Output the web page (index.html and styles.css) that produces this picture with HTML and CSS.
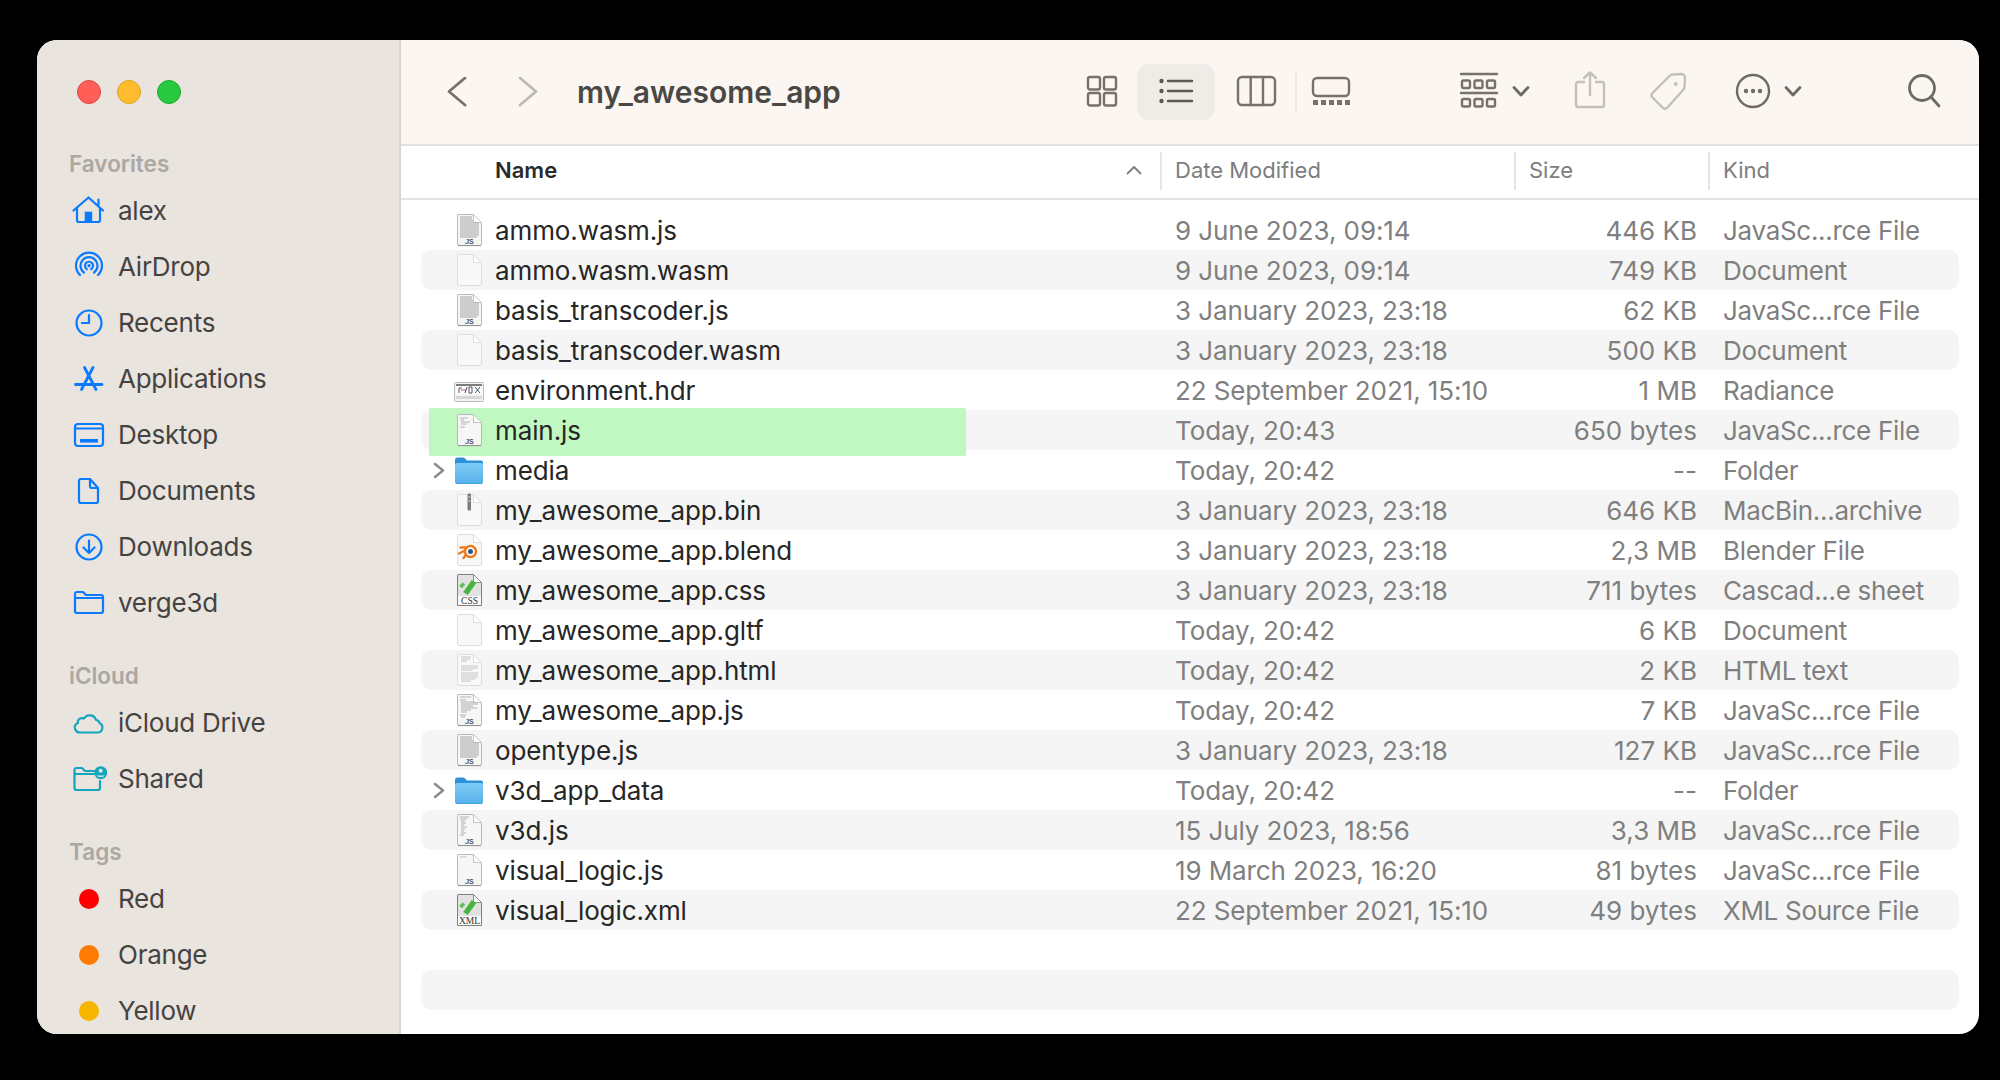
FILE: index.html
```html
<!DOCTYPE html>
<html lang="en">
<head>
    <meta charset="UTF-8">
    <title>my_awesome_app</title>
    <link rel="stylesheet" href="styles.css">
</head>
<body>
<svg class="icon-defs" width="0" height="0">
    <defs>
        <linearGradient id="folder-fill" x1="0" y1="0" x2="0" y2="1">
            <stop offset="0" stop-color="#7fcbf6"/>
            <stop offset="1" stop-color="#55b0ea"/>
        </linearGradient>
        <symbol id="page-light" viewBox="0 0 32 36">
            <path d="M5 2.5H20.5L28.5 10.5V32a1.5 1.5 0 0 1-1.5 1.5H6A1.5 1.5 0 0 1 4.500 32V3z" fill="#f8f8f8" stroke="#dedede"/>
            <path d="M20.500 2.500V10.500H28.500z" fill="#fff" stroke="#dedede"/>
        </symbol>
        <symbol id="page-grey" viewBox="0 0 32 36">
            <path d="M5 2.500H20.500L28.500 10.500V32a1.500 1.500 0 0 1-1.500 1.500H6A1.500 1.500 0 0 1 4.500 32V3z" fill="#f6f6f6" stroke="#b9b9b9"/>
            <path d="M5 33.600H28" stroke="#8f8f8f"/>
            <path d="M20.500 2.500V10.500H28.500z" fill="#fff" stroke="#c4c4c4"/>
        </symbol>
        <symbol id="icon-blank" viewBox="0 0 32 36">
            <use href="#page-light"/>
        </symbol>
        <symbol id="icon-js-dense" viewBox="0 0 32 36">
            <use href="#page-grey"/>
            <path d="M7 5H19M7 7H19M7 9H20M7 11H26M7 13H26M7 15H26M7 17H26M7 19H26M7 21H26M7 23H26M7 25H24" stroke="#a4a4a4" fill="none"/>
            <text class="icon-label" x="16.500" y="31.500">JS</text>
        </symbol>
        <symbol id="icon-js-sparse" viewBox="0 0 32 36">
            <use href="#page-grey"/>
            <path d="M7 6H15M7 8H11M8 10H17M8 12H14M7 15H12" stroke="#b5b5b5" fill="none"/>
            <text class="icon-label" x="16.500" y="31.500">JS</text>
        </symbol>
        <symbol id="icon-js-mid" viewBox="0 0 32 36">
            <use href="#page-grey"/>
            <path d="M7 5H18M7 8H13M8 10H22M8 12H25M8 14H20M8 16H24M8 18H18M8 20H14M7 23H13M8 25H12" stroke="#b0b0b0" fill="none"/>
            <text class="icon-label" x="16.500" y="31.500">JS</text>
        </symbol>
        <symbol id="icon-js-v3d" viewBox="0 0 32 36">
            <use href="#page-grey"/>
            <path d="M7 5H16M7 7H14M8 9H12M8 11H13M8 13H11M8 15H14M8 17H12M8 19H11M8 21H13M7 23H11" stroke="#b0b0b0" fill="none"/>
            <text class="icon-label" x="16.500" y="31.500">JS</text>
        </symbol>
        <symbol id="icon-js-min" viewBox="0 0 32 36">
            <use href="#page-grey"/>
            <path d="M7 5H14" stroke="#c4c4c4" fill="none"/>
            <text class="icon-label" x="16.500" y="31.500">JS</text>
        </symbol>
        <symbol id="icon-bin" viewBox="0 0 32 36">
            <use href="#page-light"/>
            <rect x="14.500" y="1.500" width="3.500" height="17" rx="1" fill="#7b7b7b"/>
            <path d="M15.200 5H17.300M15.200 9H17.300" stroke="#e4e4e4"/>
        </symbol>
        <symbol id="icon-blend" viewBox="0 0 32 36">
            <use href="#page-light"/>
            <path d="M7.500 15.500H16M6 21.500L12 18.500M10.500 26L13.500 22" stroke="#ee7a1b" stroke-width="2.400" stroke-linecap="round" fill="none"/>
            <circle cx="17.500" cy="19.500" r="5.500" fill="#fff" stroke="#ee7a1b" stroke-width="2.400"/>
            <circle cx="17.500" cy="19.500" r="2.500" fill="#265787"/>
        </symbol>
        <symbol id="icon-css" viewBox="0 0 32 36">
            <path d="M5 2.500H20.500L28.500 10.500V33.500H4.500V3z" fill="#e2e2e2" stroke="#7f7f7f"/>
            <path d="M5 24H28V33H5z" fill="#fbfbfb"/>
            <path d="M20.500 2.500V10.500H28.500z" fill="#fff" stroke="#8f8f8f"/>
            <path d="M12.500 21.500L21 9.500" stroke="#46b43f" stroke-width="5.500" fill="none"/>
            <path d="M7.500 15L11 11.500" stroke="#5cc053" stroke-width="3.500" fill="none"/>
            <text class="icon-label icon-label-doc" x="16.500" y="32">CSS</text>
        </symbol>
        <symbol id="icon-xml" viewBox="0 0 32 36">
            <path d="M5 2.500H20.500L28.500 10.500V33.500H4.500V3z" fill="#e2e2e2" stroke="#7f7f7f"/>
            <path d="M5 24H28V33H5z" fill="#fbfbfb"/>
            <path d="M20.500 2.500V10.500H28.500z" fill="#fff" stroke="#8f8f8f"/>
            <path d="M12.500 21.500L21 9.500" stroke="#46b43f" stroke-width="5.500" fill="none"/>
            <path d="M7.500 15L11 11.500" stroke="#5cc053" stroke-width="3.500" fill="none"/>
            <text class="icon-label icon-label-doc" x="16.500" y="32">XML</text>
        </symbol>
        <symbol id="icon-html" viewBox="0 0 32 36">
            <use href="#page-light"/>
            <path d="M8 5H18M8 7H17M8 9H14M8 14H25M8 16H25M8 18H20M8 21H25M8 23H25M8 25H25M8 27H22M8 29H18" stroke="#c6c6c6" fill="none"/>
        </symbol>
        <symbol id="icon-hdr" viewBox="0 0 32 36">
            <rect x="1.500" y="10.500" width="29" height="19" rx="1" fill="#f3f3f3" stroke="#bdbdbd"/>
            <rect x="3" y="12" width="26" height="2" fill="#7d7d7d"/>
            <rect x="3" y="14" width="26" height="8" fill="#fff"/>
            <path d="M6 21V16H9M12 21L14 15M16 15H19V21H16ZM22 15L27 21M27 15L22 21" stroke="#50506a" fill="none"/>
            <path d="M8 18L13 18" stroke="#d05050"/>
            <rect x="3" y="24" width="26" height="3" fill="#d6d6d6"/>
        </symbol>
        <symbol id="icon-folder" viewBox="0 0 32 36">
            <path d="M2 8a2.500 2.500 0 0 1 2.500-2.500H11l3 3h14a2 2 0 0 1 2 2V14H2z" fill="#2c90db"/>
            <rect x="2" y="11" width="28" height="21" rx="2" fill="url(#folder-fill)"/>
            <path d="M3 31.500H29" stroke="#3f9fdf"/>
        </symbol>
    </defs>
</svg>

<div class="window">
    <aside class="sidebar">
        <div class="traffic">
            <span class="light light-close"></span>
            <span class="light light-min"></span>
            <span class="light light-max"></span>
        </div>

        <section class="side-group">
            <div class="side-title">Favorites</div>
            <div class="side-item">
                <svg class="side-icon" viewBox="0 0 36 36"><path d="M2.500 17.500L17.500 4.500L32 17.500M6 15V27a2 2 0 0 0 2 2H27a2 2 0 0 0 2-2V15M27.500 6.500V12"/><rect class="solid" x="13.700" y="18.700" width="7.500" height="10"/></svg>
                <span>alex</span>
            </div>
            <div class="side-item">
                <svg class="side-icon" viewBox="0 0 36 36"><path d="M9 26A13 13 0 1 1 27 26M12.900 23.500A8.500 8.500 0 1 1 23.100 23.500M15.700 20A4 4 0 1 1 20.300 20"/><circle class="solid" cx="18" cy="16.700" r="1.600"/></svg>
                <span>AirDrop</span>
            </div>
            <div class="side-item">
                <svg class="side-icon" viewBox="0 0 36 36"><circle cx="18" cy="18" r="12.500"/><path d="M18 10V18H11"/></svg>
                <span>Recents</span>
            </div>
            <div class="side-item">
                <svg class="side-icon" viewBox="0 0 36 36"><path class="thick" d="M22 6.500L10.500 28.500M13.500 6.500L25 28.500M4.500 23.500H31"/></svg>
                <span>Applications</span>
            </div>
            <div class="side-item">
                <svg class="side-icon" viewBox="0 0 36 36"><rect x="4" y="7" width="28" height="22" rx="3"/><path d="M4 11.500H32"/><rect class="solid" x="9" y="22" width="18" height="3.600"/></svg>
                <span>Desktop</span>
            </div>
            <div class="side-item">
                <svg class="side-icon" viewBox="0 0 36 36"><path d="M8 8a2 2 0 0 1 2-2H19L27 15V28a2 2 0 0 1-2 2H10a2 2 0 0 1-2-2zM19 6V13a2 2 0 0 0 2 2H27"/></svg>
                <span>Documents</span>
            </div>
            <div class="side-item">
                <svg class="side-icon" viewBox="0 0 36 36"><circle cx="18" cy="18" r="12.500"/><path d="M18 11.500V24M12.500 18.500L18 24L23.500 18.500"/></svg>
                <span>Downloads</span>
            </div>
            <div class="side-item">
                <svg class="side-icon" viewBox="0 0 36 36"><path d="M4 9a2 2 0 0 1 2-2H12l3 3H30a2 2 0 0 1 2 2V26a2 2 0 0 1-2 2H6a2 2 0 0 1-2-2zM4 13H32"/></svg>
                <span>verge3d</span>
            </div>
        </section>

        <section class="side-group">
            <div class="side-title">iCloud</div>
            <div class="side-item">
                <svg class="side-icon side-icon-cloud" viewBox="0 0 36 36"><path d="M9 27.500H27A5 5 0 0 0 28.500 18C28 16 26 15 25 15C23.500 9.500 16 8.500 13 13.500C8 12 6 16 7 18C4 19 3 22 4 24C5 26.500 7 27.500 9 27.500Z"/></svg>
                <span>iCloud Drive</span>
            </div>
            <div class="side-item">
                <svg class="side-icon side-icon-cloud" viewBox="0 0 36 36"><path d="M3.500 9a2 2 0 0 1 2-2H11l3 3H23M3.500 9V27a2 2 0 0 0 2 2H27a2 2 0 0 0 2-2V20M3.500 13H23"/><circle class="solid" cx="29.700" cy="11.700" r="6.500"/><circle class="knock" cx="29.700" cy="9.700" r="2"/><path class="knock" d="M25.500 14.500h8.400a4.500 2.500 0 0 1-8.400 0z"/></svg>
                <span>Shared</span>
            </div>
        </section>

        <section class="side-group">
            <div class="side-title">Tags</div>
            <div class="side-item"><span class="tag-cell"><span class="tag-dot tag-red"></span></span><span>Red</span></div>
            <div class="side-item"><span class="tag-cell"><span class="tag-dot tag-orange"></span></span><span>Orange</span></div>
            <div class="side-item"><span class="tag-cell"><span class="tag-dot tag-yellow"></span></span><span>Yellow</span></div>
        </section>
    </aside>

    <main class="content">
        <header class="toolbar">
            <svg class="tool tool-back" width="22" height="30" viewBox="0 0 22 30"><path d="M19 1L3 14.500L19 28"/></svg>
            <svg class="tool tool-forward" width="22" height="30" viewBox="0 0 22 30"><path d="M3 1L19 14.500L3 28"/></svg>
            <h1 class="title">my_awesome_app</h1>

            <svg class="tool tool-grid" width="34" height="48" viewBox="0 0 34 48"><rect x="3" y="9" width="12" height="12.500" rx="2"/><rect x="19" y="9" width="12" height="12.500" rx="2"/><rect x="3" y="25" width="12" height="12.500" rx="2"/><rect x="19" y="25" width="12" height="12.500" rx="2"/></svg>
            <div class="view-active">
                <svg class="tool tool-list" width="36" height="48" viewBox="0 0 36 48"><path d="M10 13H34M10 23H34M10 33H34"/><circle class="dot" cx="3.500" cy="13" r="2.200"/><circle class="dot" cx="3.500" cy="23" r="2.200"/><circle class="dot" cx="3.500" cy="33" r="2.200"/></svg>
            </div>
            <svg class="tool tool-columns" width="43" height="48" viewBox="0 0 43 48"><rect x="3" y="9" width="37" height="28" rx="4"/><path d="M15.700 9V37M28 9V37"/></svg>
            <span class="tool-sep"></span>
            <svg class="tool tool-gallery" width="42" height="48" viewBox="0 0 42 48"><rect x="3" y="10" width="36" height="18" rx="4"/><path class="dot" d="M3 32h5v5H3zM11 32h5v5h-5zM19 32h5v5h-5zM27 32h5v5h-5zM35 32h5v5h-5z"/></svg>
            <svg class="tool tool-group" width="40" height="48" viewBox="0 0 40 48"><path d="M2 6H38M2 25H38"/><rect x="3" y="12.500" width="8" height="7.500" rx="1.500"/><rect x="15.500" y="12.500" width="8" height="7.500" rx="1.500"/><rect x="28" y="12.500" width="8" height="7.500" rx="1.500"/><rect x="3" y="31" width="8" height="7.500" rx="1.500"/><rect x="15.500" y="31" width="8" height="7.500" rx="1.500"/><rect x="28" y="31" width="8" height="7.500" rx="1.500"/></svg>
            <svg class="tool tool-caret" width="20" height="48" viewBox="0 0 20 48"><path d="M3 19.500L10 27L17 19.500"/></svg>
            <svg class="tool tool-share tool-off" width="35" height="48" viewBox="0 0 35 48"><path d="M12 14H6a2 2 0 0 0-2 2V37a2 2 0 0 0 2 2H30a2 2 0 0 0 2-2V16a2 2 0 0 0-2-2H24M18 27V4.500M12 10L18 4.500L24 10"/></svg>
            <svg class="tool tool-tag tool-off" width="41" height="48" viewBox="0 0 41 48"><path d="M25 6.500L33.500 6a3.500 3.500 0 0 1 3.500 3.500L36.500 19Q36 21 35 22L19.500 39.500Q17 42 15 40L4 29Q2.500 27 4.500 25L21.500 8Q23 6.500 25 6.500Z"/><circle class="dot" cx="27.700" cy="16" r="2"/></svg>
            <svg class="tool tool-more" width="38" height="48" viewBox="0 0 38 48"><circle cx="19" cy="23" r="16"/><circle class="dot" cx="12" cy="23" r="2.200"/><circle class="dot" cx="19" cy="23" r="2.200"/><circle class="dot" cx="26" cy="23" r="2.200"/></svg>
            <svg class="tool tool-caret tool-caret-more" width="20" height="48" viewBox="0 0 20 48"><path d="M3 19.500L10 27L17 19.500"/></svg>
            <svg class="tool tool-search" width="36" height="48" viewBox="0 0 36 48"><circle cx="16" cy="20" r="12.500"/><path d="M25 29L33 38"/></svg>
        </header>

        <div class="col-head">
            <div class="col col-name">
                <span>Name</span>
                <svg class="sort-arrow" width="16" height="10" viewBox="0 0 16 10"><path d="M1.500 8.500L8 2L14.500 8.500"/></svg>
            </div>
            <div class="col col-date">Date Modified</div>
            <div class="col col-size">Size</div>
            <div class="col col-kind">Kind</div>
        </div>

        <div class="list">
            <div class="row"><i></i><svg class="file-icon"><use href="#icon-js-dense"/></svg><span class="name">ammo.wasm.js</span><span class="meta">9 June 2023, 09:14</span><span class="meta size">446 KB</span><span class="meta">JavaSc...rce File</span></div>
            <div class="row"><i></i><svg class="file-icon"><use href="#icon-blank"/></svg><span class="name">ammo.wasm.wasm</span><span class="meta">9 June 2023, 09:14</span><span class="meta size">749 KB</span><span class="meta">Document</span></div>
            <div class="row"><i></i><svg class="file-icon"><use href="#icon-js-dense"/></svg><span class="name">basis_transcoder.js</span><span class="meta">3 January 2023, 23:18</span><span class="meta size">62 KB</span><span class="meta">JavaSc...rce File</span></div>
            <div class="row"><i></i><svg class="file-icon"><use href="#icon-blank"/></svg><span class="name">basis_transcoder.wasm</span><span class="meta">3 January 2023, 23:18</span><span class="meta size">500 KB</span><span class="meta">Document</span></div>
            <div class="row"><i></i><svg class="file-icon"><use href="#icon-hdr"/></svg><span class="name">environment.hdr</span><span class="meta">22 September 2021, 15:10</span><span class="meta size">1 MB</span><span class="meta">Radiance</span></div>
            <div class="row row-marked"><div class="mark"></div><i></i><svg class="file-icon"><use href="#icon-js-sparse"/></svg><span class="name">main.js</span><span class="meta">Today, 20:43</span><span class="meta size">650 bytes</span><span class="meta">JavaSc...rce File</span></div>
            <div class="row"><svg class="disclosure" width="32" height="40" viewBox="0 0 32 40"><path d="M14 14L22 20.500L14 27"/></svg><svg class="file-icon"><use href="#icon-folder"/></svg><span class="name">media</span><span class="meta">Today, 20:42</span><span class="meta size">--</span><span class="meta">Folder</span></div>
            <div class="row"><i></i><svg class="file-icon"><use href="#icon-bin"/></svg><span class="name">my_awesome_app.bin</span><span class="meta">3 January 2023, 23:18</span><span class="meta size">646 KB</span><span class="meta">MacBin...archive</span></div>
            <div class="row"><i></i><svg class="file-icon"><use href="#icon-blend"/></svg><span class="name">my_awesome_app.blend</span><span class="meta">3 January 2023, 23:18</span><span class="meta size">2,3 MB</span><span class="meta">Blender File</span></div>
            <div class="row"><i></i><svg class="file-icon"><use href="#icon-css"/></svg><span class="name">my_awesome_app.css</span><span class="meta">3 January 2023, 23:18</span><span class="meta size">711 bytes</span><span class="meta">Cascad...e sheet</span></div>
            <div class="row"><i></i><svg class="file-icon"><use href="#icon-blank"/></svg><span class="name">my_awesome_app.gltf</span><span class="meta">Today, 20:42</span><span class="meta size">6 KB</span><span class="meta">Document</span></div>
            <div class="row"><i></i><svg class="file-icon"><use href="#icon-html"/></svg><span class="name">my_awesome_app.html</span><span class="meta">Today, 20:42</span><span class="meta size">2 KB</span><span class="meta">HTML text</span></div>
            <div class="row"><i></i><svg class="file-icon"><use href="#icon-js-mid"/></svg><span class="name">my_awesome_app.js</span><span class="meta">Today, 20:42</span><span class="meta size">7 KB</span><span class="meta">JavaSc...rce File</span></div>
            <div class="row"><i></i><svg class="file-icon"><use href="#icon-js-dense"/></svg><span class="name">opentype.js</span><span class="meta">3 January 2023, 23:18</span><span class="meta size">127 KB</span><span class="meta">JavaSc...rce File</span></div>
            <div class="row"><svg class="disclosure" width="32" height="40" viewBox="0 0 32 40"><path d="M14 14L22 20.500L14 27"/></svg><svg class="file-icon"><use href="#icon-folder"/></svg><span class="name">v3d_app_data</span><span class="meta">Today, 20:42</span><span class="meta size">--</span><span class="meta">Folder</span></div>
            <div class="row"><i></i><svg class="file-icon"><use href="#icon-js-v3d"/></svg><span class="name">v3d.js</span><span class="meta">15 July 2023, 18:56</span><span class="meta size">3,3 MB</span><span class="meta">JavaSc...rce File</span></div>
            <div class="row"><i></i><svg class="file-icon"><use href="#icon-js-min"/></svg><span class="name">visual_logic.js</span><span class="meta">19 March 2023, 16:20</span><span class="meta size">81 bytes</span><span class="meta">JavaSc...rce File</span></div>
            <div class="row"><i></i><svg class="file-icon"><use href="#icon-xml"/></svg><span class="name">visual_logic.xml</span><span class="meta">22 September 2021, 15:10</span><span class="meta size">49 bytes</span><span class="meta">XML Source File</span></div>
            <div class="row"></div>
            <div class="row"></div>
        </div>
    </main>
</div>
</body>
</html>
```

FILE: styles.css
```css
body {
    margin: 0;
    height: 1080px;
    padding: 40px 21px 46px 37px;
    box-sizing: border-box;
    background-color: #000;
    font-family: "Inter", "Liberation Sans", sans-serif;
    overflow: hidden;
}
.icon-defs {
    position: absolute;
}
.icon-label {
    font-family: "Liberation Sans", sans-serif;
    font-size: 7px;
    font-weight: bold;
    fill: #555;
    text-anchor: middle;
}
.icon-label-doc {
    font-family: "Liberation Serif", serif;
    font-size: 9.500px;
    font-weight: normal;
    fill: #333;
}
.window {
    display: flex;
    height: 994px;
    border-radius: 20px;
    overflow: hidden;
    background-color: #fff;
}

/* sidebar */
.sidebar {
    width: 364px;
    box-sizing: border-box;
    flex-shrink: 0;
    padding: 40px 0 0 32px;
    background-color: #e9e4de;
    border-right: 2px solid #d9d4ce;
    overflow: hidden;
}
.traffic {
    display: flex;
    gap: 16px;
    margin: 0 0 42px 8px;
}
.light {
    width: 24px;
    height: 24px;
    box-sizing: border-box;
    border-radius: 50%;
    border: 1px solid;
}
.light-close {
    background-color: #ff5f57;
    border-color: #e0443e;
}
.light-min {
    background-color: #febc2e;
    border-color: #dea123;
}
.light-max {
    background-color: #28c840;
    border-color: #1aab29;
}
.side-group {
    margin-bottom: 27px;
}
.side-title {
    height: 37px;
    line-height: 35px;
    font-size: 22.500px;
    font-weight: 600;
    color: #aba7a2;
}
.side-item {
    display: flex;
    align-items: center;
    height: 56px;
    font-size: 26px;
    letter-spacing: -0.25px;
    color: #454341;
}
.side-item > span:last-child {
    margin-bottom: 2px;
}
.side-icon {
    width: 36px;
    height: 36px;
    margin: 0 11px 0 2px;
    flex-shrink: 0;
    fill: none;
    stroke: #0a7bff;
    stroke-width: 2.200;
    stroke-linecap: round;
    stroke-linejoin: round;
}
.side-icon .solid {
    fill: #0a7bff;
    stroke: none;
}
.side-icon .thick {
    stroke-width: 2.800;
}
.side-icon-cloud {
    stroke: #12a5bd;
}
.side-icon-cloud .solid {
    fill: #12a5bd;
}
.side-icon-cloud .knock {
    fill: #e9e4de;
    stroke: none;
}
.tag-cell {
    display: flex;
    justify-content: center;
    width: 36px;
    margin: 0 11px 0 2px;
}
.tag-dot {
    width: 20px;
    height: 20px;
    border-radius: 50%;
}
.tag-red {
    background-color: #fe0000;
}
.tag-orange {
    background-color: #ff7a00;
}
.tag-yellow {
    background-color: #f7b500;
}

/* toolbar */
.content {
    flex: 1;
    min-width: 0;
    display: flex;
    flex-direction: column;
}
.toolbar {
    display: flex;
    align-items: center;
    height: 104px;
    flex-shrink: 0;
    padding: 0 37px 0 45px;
    background-color: #fbf6f2;
    border-bottom: 2px solid #e2dfdc;
}
.tool {
    flex-shrink: 0;
    fill: none;
    stroke: #77716b;
    stroke-width: 2.400;
    stroke-linecap: round;
    stroke-linejoin: round;
}
.tool .dot {
    fill: #77716b;
    stroke: none;
}
.tool-back {
    stroke: #77716b;
    stroke-width: 2.800;
}
.tool-forward {
    margin-left: 49px;
    stroke: #bdb8b3;
    stroke-width: 2.800;
}
.title {
    flex: 1;
    margin: 0 0 0 38px;
    font-size: 30px;
    font-weight: 600;
    color: #4a4845;
}
.view-active {
    display: flex;
    justify-content: center;
    width: 78px;
    height: 56px;
    align-items: center;
    margin-left: 18px;
    border-radius: 12px;
    background-color: #efebe6;
}
.tool-list {
    stroke: #5d5853;
}
.tool-list .dot {
    fill: #5d5853;
}
.tool-columns {
    margin-left: 20px;
}
.tool-sep {
    width: 2px;
    height: 40px;
    margin: 0 13px 0 17px;
    background-color: #eee9e4;
}
.tool-group {
    margin-left: 107px;
}
.tool-caret {
    margin-left: 12px;
    stroke: #6f6a65;
    stroke-width: 2.800;
}
.tool-share {
    margin-left: 41px;
}
.tool-off {
    stroke: #c4bfba;
}
.tool-off .dot {
    fill: #c4bfba;
}
.tool-tag {
    margin-left: 41px;
}
.tool-more {
    margin-left: 45px;
    stroke: #6f6a65;
}
.tool-more .dot {
    fill: #6f6a65;
}
.tool-caret-more {
    margin-left: 11px;
}
.tool-search {
    margin-left: 103px;
    stroke: #6f6a65;
    stroke-width: 2.800;
}

/* column header */
.col-head {
    display: flex;
    align-items: center;
    height: 54px;
    box-sizing: border-box;
    flex-shrink: 0;
    padding: 0 0 2px 94px;
    border-bottom: 2px solid #e3e3e3;
    font-size: 22px;
    color: #7d7d7d;
}
.col {
    display: flex;
    align-items: center;
    height: 38px;
    padding-bottom: 2px;
    box-sizing: border-box;
}
.col-name {
    width: 665px;
    justify-content: space-between;
    padding-right: 18px;
    font-weight: 600;
    color: #2a2a2a;
}
.col-date,
.col-size,
.col-kind {
    padding-left: 13px;
    border-left: 2px solid #e6e6e6;
}
.col-date {
    width: 354px;
}
.col-size {
    width: 194px;
}
.col-kind {
    flex: 1;
}
.sort-arrow {
    fill: none;
    stroke: #7d7d7d;
    stroke-width: 1.800;
    stroke-linecap: round;
    stroke-linejoin: round;
}

/* file rows */
.list {
    flex: 1;
    padding: 10px 20px 0;
}
.row {
    display: grid;
    grid-template-columns: 32px 32px 690px 354px 168px 1fr;
    align-items: center;
    position: relative;
    height: 40px;
    border-radius: 10px;
    font-size: 26px;
    color: #262626;
}
.row:nth-child(even) {
    background-color: #f4f5f4;
}
.row .name {
    margin-left: 10px;
    letter-spacing: -0.1px;
    white-space: nowrap;
}
.meta {
    color: #7f7f7f;
    white-space: nowrap;
}
.name + .meta {
    letter-spacing: -0.1px;
}
.size {
    text-align: right;
}
.size + .meta {
    padding-left: 26px;
    letter-spacing: -0.3px;
}
.file-icon {
    width: 32px;
    height: 36px;
}
.disclosure {
    fill: none;
    stroke: #8a8a8a;
    stroke-width: 2.400;
    stroke-linecap: round;
    stroke-linejoin: round;
}
.mark {
    position: absolute;
    left: 8px;
    top: -2px;
    width: 537px;
    height: 48px;
    background-color: #c1f8c1;
}
.row-marked .file-icon,
.row-marked span {
    position: relative;
}
```
